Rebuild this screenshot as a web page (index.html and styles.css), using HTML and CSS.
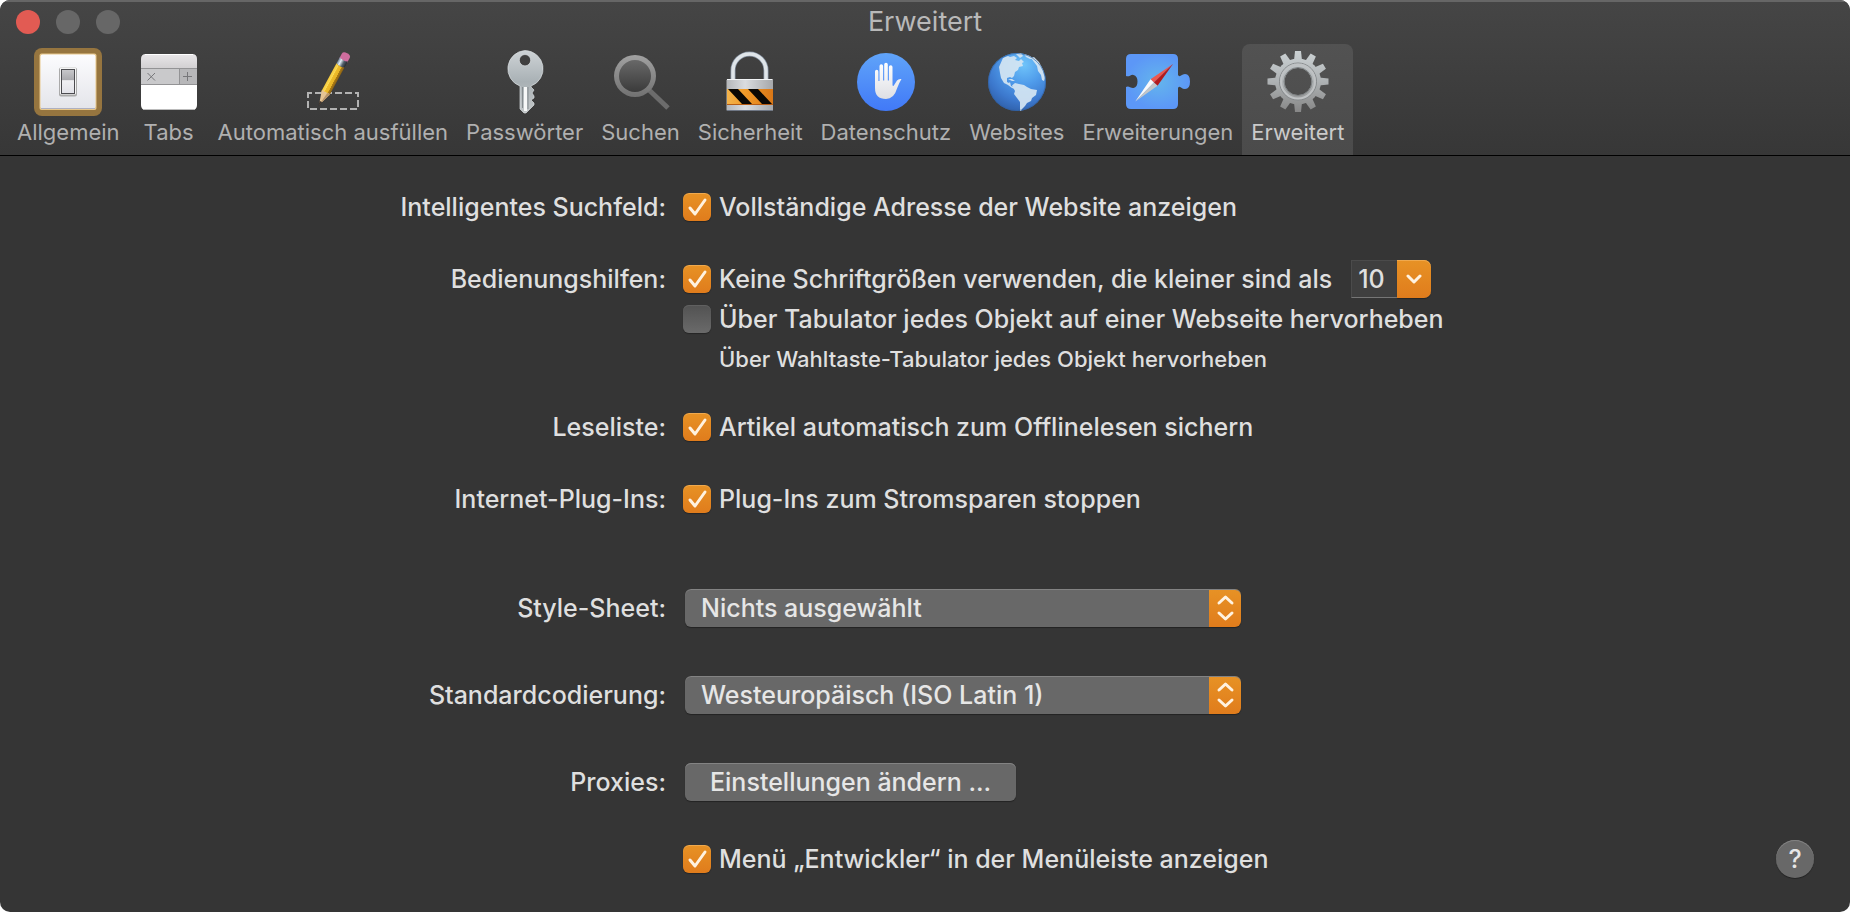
FILE: index.html
```html
<!DOCTYPE html>
<html lang="de">
<head>
  <meta charset="UTF-8">
  <title>Erweitert</title>
  <link rel="stylesheet" href="styles.css">
</head>
<body>
  <div class="window">
    <header class="header">
      <div class="titlebar">
        <div class="lights">
          <button class="light close" aria-label="Schließen"></button>
          <button class="light" aria-label="Minimieren"></button>
          <button class="light" aria-label="Zoomen"></button>
        </div>
        <h1 class="title">Erweitert</h1>
      </div>

      <nav class="toolbar">
        <button class="tool">
          <svg class="icon" viewBox="0 0 68 68">
            <defs>
              <linearGradient id="plate" x2="0" y2="1"><stop offset="0" stop-color="#fcfcfe"/><stop offset="1" stop-color="#e4e5ea"/></linearGradient>
              <linearGradient id="rocker" x2="0" y2="1"><stop offset="0" stop-color="#c9c9cc"/><stop offset=".45" stop-color="#a9a9ad"/><stop offset=".46" stop-color="#f0f0f3"/><stop offset="1" stop-color="#e2e2e8"/></linearGradient>
            </defs>
            <rect width="68" height="68" rx="8" fill="#96753f"/>
            <rect x="5.500" y="5.500" width="57" height="56.500" rx="2" fill="#e8c88c"/>
            <rect x="6.500" y="6.500" width="55" height="54" rx="2" fill="url(#plate)"/>
            <path d="M7 60.500h54" stroke="#aeb0c0"/>
            <rect x="25" y="19.500" width="18" height="29" rx="2" fill="#aaa"/>
            <rect x="26" y="19.500" width="16" height="27" rx="1" fill="#f4f4f4"/>
            <rect x="27.500" y="21.500" width="13" height="24" fill="url(#rocker)" stroke="#4c4c50"/>
          </svg>
          <span>Allgemein</span>
        </button>

        <button class="tool">
          <svg class="icon" viewBox="0 0 68 68">
            <defs>
              <linearGradient id="tabtop" x2="0" y2="1"><stop offset="0" stop-color="#e9e7e9"/><stop offset="1" stop-color="#d2d0d2"/></linearGradient>
            </defs>
            <path d="M6 20h56v37q0 5-5 5H11q-5 0-5-5z" fill="#fff"/>
            <path d="M6 20v-9q0-5 5-5h46q5 0 5 5v9z" fill="url(#tabtop)"/>
            <path d="M10 6.500h48" stroke="#fff"/>
            <path d="M6 20.500h56v16H6z" fill="#c9c9cb"/>
            <path d="M44.500 20.500H62v16H44.500z" fill="#b7b7b9"/>
            <path d="M6 20.500h56M6 36.500h56M44.500 20v16" stroke="#939395" fill="none"/>
            <path d="M12.500 25l7.500 7.500M20 25l-7.500 7.500M48 28.500h9M52.500 24v9" stroke="#77777a" fill="none"/>
            <path d="M8 61.500h52" stroke="#bbb"/>
          </svg>
          <span>Tabs</span>
        </button>

        <button class="tool">
          <svg class="icon" viewBox="0 0 68 68">
            <defs>
              <linearGradient id="wood"><stop offset="0" stop-color="#f4c83c"/><stop offset=".3" stop-color="#fbdb55"/><stop offset=".35" stop-color="#eebc2c"/><stop offset=".7" stop-color="#e8b424"/><stop offset=".72" stop-color="#ad7d16"/><stop offset="1" stop-color="#8b6214"/></linearGradient>
              <linearGradient id="ferrule"><stop offset="0" stop-color="#71879a"/><stop offset=".3" stop-color="#e3eef5"/><stop offset=".65" stop-color="#53616c"/><stop offset="1" stop-color="#252b33"/></linearGradient>
            </defs>
            <rect x="9" y="45" width="50" height="16" fill="none" stroke="#b2b2b2" stroke-width="2" stroke-dasharray="7 3" stroke-dashoffset="3"/>
            <g transform="translate(20 57) rotate(28.500)">
              <path d="M-4.500-50v-6q0-3 4.500-3t4.500 3v6z" fill="#cf6d9e"/>
              <path d="M-4.500-52q4.500 2 9 0v7q-4.500 2-9 0z" fill="url(#ferrule)"/>
              <path d="M-4.500-45q4.500 2 9 0v32h-9z" fill="url(#wood)"/>
              <path d="M-4.500-14q1.500-2 3 0 1.500-2 3 0 1.500-2 3 0L0 0z" fill="#e5c494"/>
              <path d="M1.500-14q1.500-2 3 0L0 0z" fill="#b8946a"/>
              <path d="M-1.500-4h3L0 1z" fill="#3b332e"/>
            </g>
          </svg>
          <span>Automatisch ausfüllen</span>
        </button>

        <button class="tool">
          <svg class="icon" viewBox="0 0 68 68">
            <defs>
              <linearGradient id="key" x2="0" y2="1"><stop offset="0" stop-color="#ced3d6"/><stop offset=".5" stop-color="#a9b1b5"/><stop offset="1" stop-color="#c3c7c9"/></linearGradient>
            </defs>
            <path fill-rule="evenodd" d="M34 2.500a18.300 18.300 0 0 1 6 35.500v1l3 3-2 3 2 3v2l-3 2 3 3v2l-3 3-5 5h-2l-4-4V38a18.300 18.300 0 0 1 5-35.500zM34 6.500a5.700 5.700 0 1 0 0 11.400a5.700 5.700 0 1 0 0-11.400z" fill="url(#key)" stroke="#d9dddf" stroke-width=".7"/>
            <path d="M33 39h3v24h-3z" fill="#f7f8f8"/>
            <path d="M37 39v22M31.500 39v21" stroke="#858b8f" stroke-width="1"/>
          </svg>
          <span>Passwörter</span>
        </button>

        <button class="tool">
          <svg class="icon" viewBox="0 0 68 68">
            <defs>
              <linearGradient id="ring" x2="0" y2="1"><stop offset="0" stop-color="#a1a1a1"/><stop offset="1" stop-color="#717171"/></linearGradient>
              <linearGradient id="lens" x2="0" y2="1"><stop offset="0" stop-color="#686868"/><stop offset="1" stop-color="#3b3b3b"/></linearGradient>
            </defs>
            <path d="M41 41l20 19" stroke="#6c6c6c" stroke-width="5"/>
            <circle cx="28" cy="28" r="21" fill="url(#ring)"/>
            <circle cx="28" cy="28" r="16" fill="url(#lens)"/>
          </svg>
          <span>Suchen</span>
        </button>

        <button class="tool">
          <svg class="icon" viewBox="0 0 68 68">
            <defs>
              <linearGradient id="lockbody"><stop offset="0" stop-color="#b4b6b9"/><stop offset=".4" stop-color="#dadcdf"/><stop offset="1" stop-color="#a5a7aa"/></linearGradient>
              <linearGradient id="band"><stop offset="0" stop-color="#f3b34b"/><stop offset=".4" stop-color="#f29a28"/><stop offset="1" stop-color="#d97717"/></linearGradient>
            </defs>
            <path d="M17 32V22.500a16.500 16.500 0 0 1 33 0V32" fill="none" stroke="#8995a5" stroke-width="5"/>
            <path d="M17 32V22.500a16.500 16.500 0 0 1 33 0V32" fill="none" stroke="#dfe5e9" stroke-width="3.500"/>
            <rect x="10.500" y="31" width="46.500" height="32" rx="1.500" fill="url(#lockbody)"/>
            <path d="M11 31.500h45.500" stroke="#f1f3f5"/>
            <path d="M11 41h46v16H11z" fill="url(#band)"/>
            <path d="M12 41h10l14 15H26zM32 41h10l14 15H46z" fill="#0b0804"/>
            <path d="M11 56.500h46" stroke="#b65c14"/>
            <path d="M11 62.500h45.500" stroke="#6f7785"/>
          </svg>
          <span>Sicherheit</span>
        </button>

        <button class="tool">
          <svg class="icon" viewBox="0 0 68 68">
            <defs>
              <linearGradient id="blue" x2="0" y2="1"><stop offset="0" stop-color="#60a4f9"/><stop offset="1" stop-color="#4179f7"/></linearGradient>
              <linearGradient id="hand" x2="0" y2="1"><stop offset="0" stop-color="#fff"/><stop offset="1" stop-color="#dedfe4"/></linearGradient>
            </defs>
            <circle cx="34" cy="34" r="29" fill="url(#blue)"/>
            <path d="M23 23.500a1.700 1.700 0 0 1 3.400 0V33h1.100V18a1.800 1.800 0 0 1 3.600 0v14.500h1.100V16.500a1.800 1.800 0 0 1 3.600 0v16h1.100V19a1.800 1.800 0 0 1 3.600 0v18.500l1 .5 3.500-5.500q1.500-2 4.500-1.500-2.500 4-4.500 9.500Q42 51 34 51 23 51 23 40z" fill="url(#hand)"/>
          </svg>
          <span>Datenschutz</span>
        </button>

        <button class="tool">
          <svg class="icon" viewBox="0 0 68 68">
            <defs>
              <radialGradient id="sea" cx=".62" cy=".2" r=".85"><stop offset="0" stop-color="#6fc4fa"/><stop offset=".4" stop-color="#4f9bea"/><stop offset=".75" stop-color="#3c78cd"/><stop offset="1" stop-color="#2f5fa8"/></radialGradient>
            </defs>
            <circle cx="34" cy="34" r="29" fill="url(#sea)"/>
            <g fill="#d5e6f3" opacity=".92">
              <path d="M20 10l5-2 2 1 4-1 3 2-2 2 4 1 2-2 3 3-2 1 1 3-4 1-1 3-3 2-1 4-2 2-2-1-3 1v4l2 1 1-1 1 4 3 1 1 2-3-1-4-3-4-2-3-5-1-5-1-6z"/>
              <path d="M29 37.500l3-2.500 4 1 5 1 3 2 4 2 6 1-1 5-4 3-1 3-4 2-2 3-3 3-1 2h-1v-9l-3-4-3-4 1-3z"/>
              <path d="M33 6l5-1 2 3-3 2zM41 6l6 2 3 3-3 0-4-2zM48 10l3-1 5 5 4 8 2 8-1 3-2-1-1-5-3-4-1-5-3-4z"/>
              <path d="M25 31l4 0 3 2-3 0z"/>
            </g>
            <circle cx="34" cy="34" r="28.500" fill="none" stroke="#315f9c" opacity=".6"/>
          </svg>
          <span>Websites</span>
        </button>

        <button class="tool">
          <svg class="icon" viewBox="0 0 68 68">
            <defs>
              <radialGradient id="puzzle" cx=".5" cy=".5" r=".5"><stop offset="0" stop-color="#64b5ec"/><stop offset="1" stop-color="#5c97f7"/></radialGradient>
            </defs>
            <path d="M7 6h42q5 0 5 5v16q1 2 3 .500 2-1.500 4-1.500 5 0 5 7.500T61 41q-2 0-4-1.500-2-1.500-3 .500v16q0 5-5 5H7q-5 0-5-5V39q2-1 4 .200 2 1 3.500 .800 4-1 4-6.500T9.500 27q-1.500-.500-3.500 .800-2 1-4 .200V11q0-5 5-5z" fill="url(#puzzle)"/>
            <path d="M49 16L26.500 31.300l3.400 3.300z" fill="#ec5850"/>
            <path d="M49 16L33.500 37.800l-3.600-3.200z" fill="#b31a1c"/>
            <path d="M11.300 53.500L26.500 31.300l3.400 3.300z" fill="#fafafa"/>
            <path d="M11.300 53.500L33.500 37.800l-3.600-3.200z" fill="#c3c6c8"/>
          </svg>
          <span>Erweiterungen</span>
        </button>

        <button class="tool active">
          <svg class="icon" viewBox="0 0 68 68">
            <defs>
              <linearGradient id="steel" gradientUnits="userSpaceOnUse" x1="0" y1="-31" x2="0" y2="31"><stop offset="0" stop-color="#ccd2d4"/><stop offset=".5" stop-color="#aeb2b4"/><stop offset="1" stop-color="#868686"/></linearGradient>
              <path id="tooth" d="M-4-21l1-9.500h6l1 9.500z"/>
              <mask id="teeth" maskUnits="userSpaceOnUse" x="-34" y="-34" width="68" height="68">
                <g fill="#fff">
                  <circle r="23"/>
                  <use href="#tooth"/>
                  <use href="#tooth" transform="rotate(30)"/>
                  <use href="#tooth" transform="rotate(60)"/>
                  <use href="#tooth" transform="rotate(90)"/>
                  <use href="#tooth" transform="rotate(120)"/>
                  <use href="#tooth" transform="rotate(150)"/>
                  <use href="#tooth" transform="rotate(180)"/>
                  <use href="#tooth" transform="rotate(210)"/>
                  <use href="#tooth" transform="rotate(240)"/>
                  <use href="#tooth" transform="rotate(270)"/>
                  <use href="#tooth" transform="rotate(300)"/>
                  <use href="#tooth" transform="rotate(330)"/>
                </g>
                <circle r="13.500" fill="#000"/>
              </mask>
            </defs>
            <g transform="translate(34 33.500)">
              <rect x="-34" y="-34" width="68" height="68" fill="url(#steel)" mask="url(#teeth)"/>
              <circle r="18.500" fill="none" stroke="#85898b"/>
              <circle r="17" fill="none" stroke="#bfc2c4" stroke-width="2"/>
              <circle r="14" fill="none" stroke="#7e8284"/>
            </g>
          </svg>
          <span>Erweitert</span>
        </button>
      </nav>
    </header>

    <form class="settings">
      <div class="row">
        <span class="caption">Intelligentes Suchfeld:</span>
        <label class="check"><input type="checkbox" checked>Vollständige Adresse der Website anzeigen</label>
      </div>

      <div class="row">
        <span class="caption">Bedienungshilfen:</span>
        <div class="options">
          <div class="line">
            <label class="check"><input type="checkbox" checked>Keine Schriftgrößen verwenden, die kleiner sind als</label>
            <div class="combo">
              <input class="combo-input" type="text" value="10" aria-label="Minimale Schriftgröße">
              <button class="combo-btn" type="button" aria-label="Größen anzeigen">
                <svg viewBox="0 0 16 10"><path d="M2 2l6 6 6-6"/></svg>
              </button>
            </div>
          </div>
          <label class="check"><input type="checkbox">Über Tabulator jedes Objekt auf einer Webseite hervorheben</label>
          <p class="hint">Über Wahltaste-Tabulator jedes Objekt hervorheben</p>
        </div>
      </div>

      <div class="row tight">
        <span class="caption">Leseliste:</span>
        <label class="check"><input type="checkbox" checked>Artikel automatisch zum Offlinelesen sichern</label>
      </div>

      <div class="row">
        <span class="caption">Internet-Plug-Ins:</span>
        <label class="check"><input type="checkbox" checked>Plug-Ins zum Stromsparen stoppen</label>
      </div>

      <div class="row section">
        <label class="caption" for="stylesheet">Style-Sheet:</label>
        <select class="popup" id="stylesheet"><option>Nichts ausgewählt</option></select>
      </div>

      <div class="row wide">
        <label class="caption" for="encoding">Standardcodierung:</label>
        <select class="popup" id="encoding"><option>Westeuropäisch (ISO Latin 1)</option></select>
      </div>

      <div class="row wide">
        <label class="caption" for="proxies">Proxies:</label>
        <button class="push" id="proxies" type="button">Einstellungen ändern ...</button>
      </div>

      <div class="row last">
        <label class="check"><input type="checkbox" checked>Menü „Entwickler“ in der Menüleiste anzeigen</label>
        <button class="help" type="button">?</button>
      </div>
    </form>
  </div>
</body>
</html>
```
FILE: styles.css
```css
* { box-sizing: border-box; margin: 0; padding: 0; }
body {
  background: #fff;
  color: #dfdfdf;
  font-family: Inter, Roboto, "Liberation Sans", sans-serif;
  font-size: 25px;
  line-height: 38px;
}
button, input, select {
  font: inherit;
  color: inherit;
  border: none;
  outline: none;
}
.window {
  min-height: 100vh;
  background: #353535;
  border-radius: 10px;
  overflow: hidden;
}

/* Title bar and toolbar */
.header {
  background: linear-gradient(#454545, #373737);
  border-top: 2px solid #666;
  border-bottom: 1px solid #000;
}
.titlebar {
  display: grid;
  grid-template-columns: 1fr auto 1fr;
  align-items: center;
  height: 40px;
  padding: 0 16px;
}
.lights {
  display: flex;
  gap: 16px;
}
.light {
  width: 24px;
  height: 24px;
  border-radius: 50%;
  background: #676767;
}
.light.close {
  background: #e25b53;
}
.title {
  font-size: 27px;
  font-weight: 400;
  color: #b9b9b9;
}
.toolbar {
  display: flex;
  padding: 2px 8px 0;
}
.tool {
  display: flex;
  flex-direction: column;
  align-items: center;
  gap: 3px;
  min-width: 80px;
  padding: 4px 9px 10px;
  background: none;
  color: #b0b0b0;
  font-size: 22px;
  line-height: 26px;
  white-space: nowrap;
}
.tool.active {
  background: linear-gradient(#525252, #4b4b4b);
  border-radius: 8px 8px 0 0;
  color: #cacaca;
}
.icon {
  width: 68px;
  height: 68px;
  margin: 0 -6px;
}

/* Settings form */
.settings {
  padding-top: 32px;
  font-weight: 500;
}
.row {
  display: grid;
  grid-template-columns: 36% 1fr;
  column-gap: 19px;
  margin-bottom: 34px;
}
.row.tight { margin-top: -4px; }
.row.section { margin-top: 71px; }
.row.wide { margin-top: 49px; }
.row.section, .row.wide { margin-bottom: 0; }
.caption {
  text-align: right;
}
.options {
  display: flex;
  flex-direction: column;
  gap: 2px;
}
.line {
  display: flex;
  gap: 19px;
}
.check {
  display: flex;
  align-items: center;
  gap: 8px;
  margin-left: -2px;
  white-space: nowrap;
}
.check input {
  appearance: none;
  width: 28px;
  height: 28px;
  border-radius: 6px;
  background: linear-gradient(#525252, #6a6a6a);
  box-shadow: 0 1px 1px rgba(0, 0, 0, 0.3), inset 0 1px #606060;
}
.check input:checked {
  background:
    url("data:image/svg+xml,%3Csvg xmlns='http://www.w3.org/2000/svg' viewBox='0 0 28 28'%3E%3Cpath d='M7 15l5 6 10-14' fill='none' stroke='%23fff2e0' stroke-width='3' stroke-linecap='round' stroke-linejoin='round'/%3E%3C/svg%3E"),
    linear-gradient(#e79225, #e07c1c);
  box-shadow: 0 1px 1px rgba(0, 0, 0, 0.3), inset 0 1px #efa94e;
}
.hint {
  padding-left: 34px;
  font-size: 22px;
}

/* Size combo box */
.combo {
  display: flex;
}
.combo-input {
  width: 46px;
  height: 38px;
  padding-left: 6px;
  background: #3f3f3f;
  border-top: 1px solid #4b4b4b;
  border-left: 1px solid #4b4b4b;
  border-bottom: 1px solid #767676;
}
.combo-btn {
  display: flex;
  align-items: center;
  justify-content: center;
  width: 34px;
  height: 38px;
  border-radius: 0 7px 7px 0;
  background: linear-gradient(#e79225, #e07c1c);
  box-shadow: 0 1px 1px rgba(0, 0, 0, 0.3), inset 0 1px #efa94e;
}
.combo-btn svg {
  width: 16px;
  height: 10px;
  fill: none;
  stroke: #fff2e0;
  stroke-width: 3;
  stroke-linecap: round;
  stroke-linejoin: round;
}

/* Popup menus and push buttons */
.popup, .push {
  height: 38px;
  border-radius: 6px;
  background-color: #686868;
  box-shadow: 0 1px 1px rgba(0, 0, 0, 0.35), inset 0 1px #838383;
  justify-self: start;
  color: #e6e6e6;
}
.popup {
  appearance: none;
  width: 556px;
  padding: 0 48px 0 16px;
  background-image:
    url("data:image/svg+xml,%3Csvg xmlns='http://www.w3.org/2000/svg' viewBox='0 0 32 38'%3E%3Cpath d='M10 14l6.500-6 6.500 6M10 24l6.500 6 6.500-6' fill='none' stroke='%23fff2e0' stroke-width='3' stroke-linecap='round' stroke-linejoin='round'/%3E%3C/svg%3E"),
    linear-gradient(#e79225, #e07c1c);
  background-position: right top;
  background-repeat: no-repeat;
  background-size: 32px 38px;
}
.push {
  padding: 0 25px;
}

.row.last {
  grid-template-columns: 36% 1fr auto;
  margin: 39px 0 30px;
}
.row.last .check {
  grid-column: 2;
}
.help {
  width: 38px;
  height: 38px;
  margin-right: 36px;
  border-radius: 50%;
  background: #686868;
  box-shadow: 0 1px 1px rgba(0, 0, 0, 0.35), inset 0 1px #838383;
  color: #e6e6e6;
  font-size: 25px;
}
```
